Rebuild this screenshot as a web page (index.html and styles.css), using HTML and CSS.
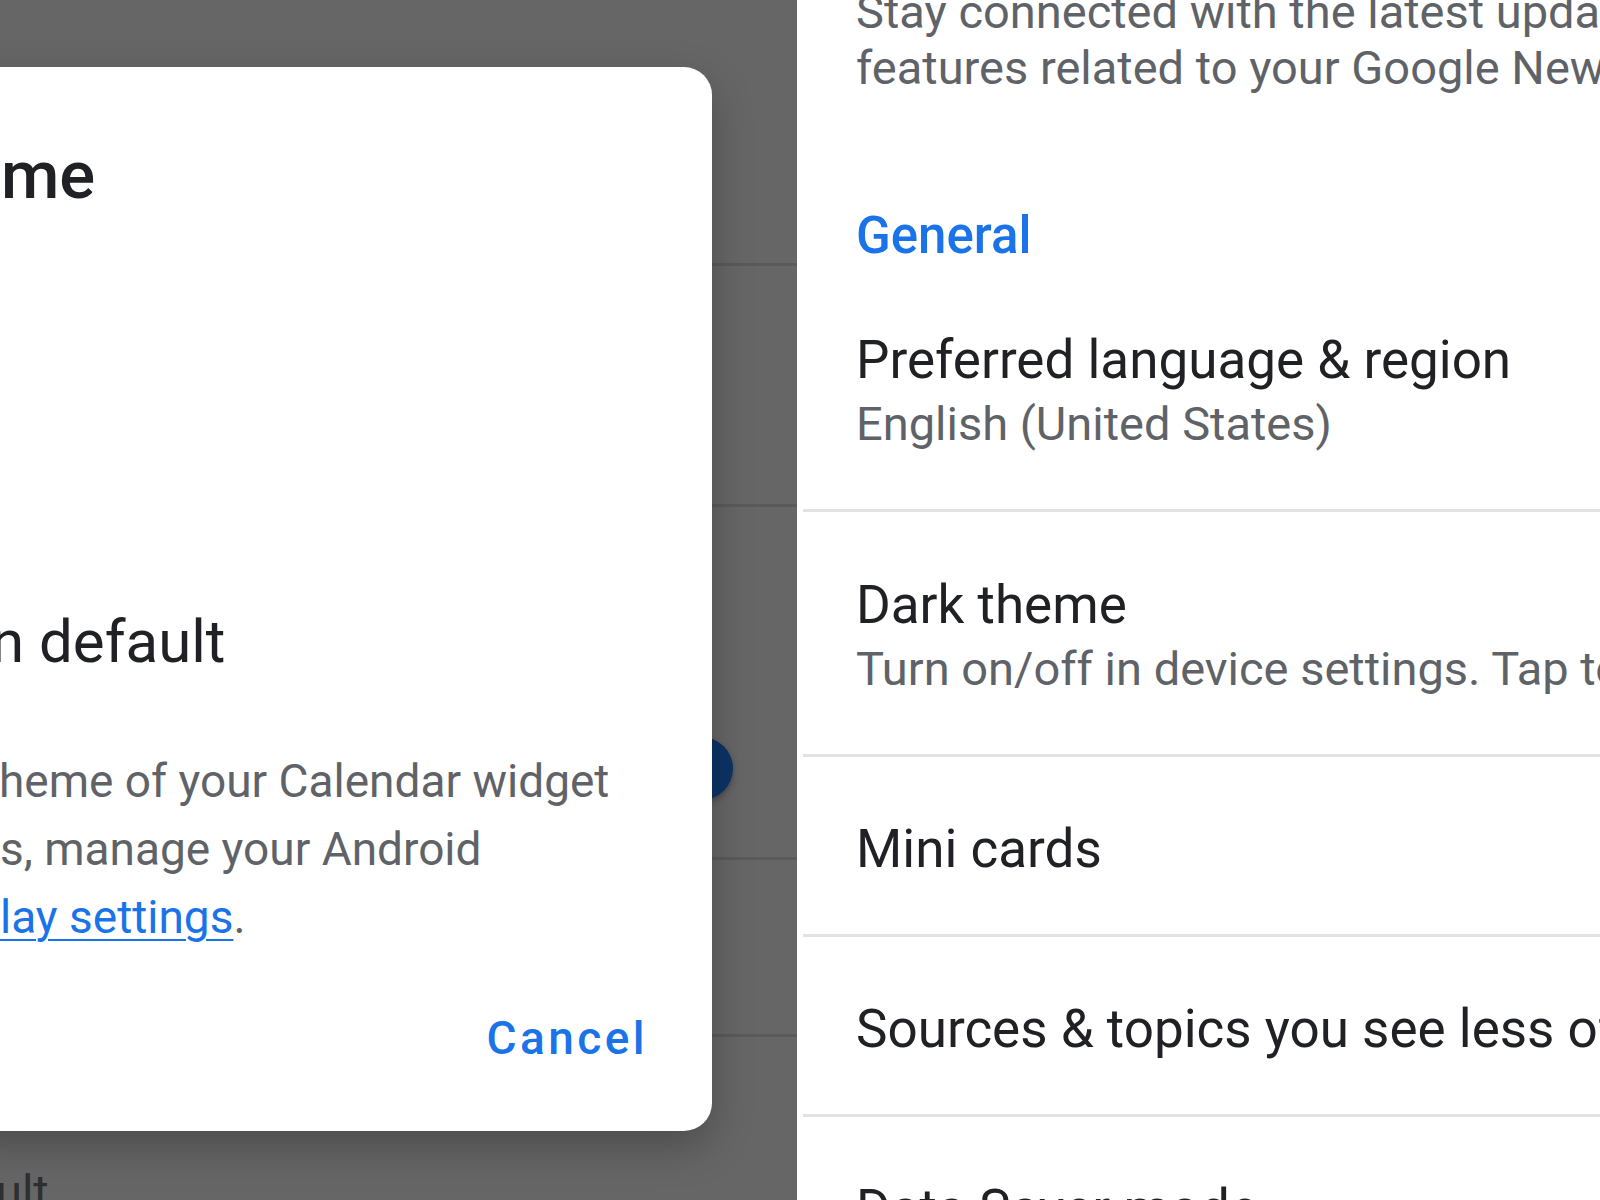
FILE: index.html
```html
<!DOCTYPE html>
<html lang="en">
<head>
    <meta charset="UTF-8">
    <meta name="viewport" content="width=device-width, initial-scale=1.0">
    <title>Theme settings</title>
    <link rel="stylesheet" href="styles.css">
</head>
<body>
    <div class="screens">
        <!-- Calendar: theme dialog over dimmed settings -->
        <section class="screen-calendar">
            <div class="dim-list">
                <div class="dim-row dim-row-a"></div>
                <div class="dim-row dim-row-b"></div>
                <div class="dim-row dim-row-c"><span class="dim-thumb"></span></div>
                <div class="dim-row dim-row-d"></div>
                <div class="dim-row dim-row-e"><span class="dim-text">ult</span></div>
            </div>

            <div class="dialog">
                <h2 class="dialog-title">me</h2>
                <div class="dialog-option">n default</div>
                <p class="dialog-body">
                    <span class="line line-1">heme of your Calendar widget</span>
                    <span class="line line-2">s, manage your Android</span>
                    <span class="line line-3"><a href="#" class="link">lay settings</a>.</span>
                </p>
                <div class="dialog-actions">
                    <button class="btn-text">Cancel</button>
                </div>
            </div>
        </section>

        <!-- News: settings list -->
        <section class="screen-news">
            <p class="intro">
                <span>Stay connected with the latest updates and</span>
                <span>features related to your Google News</span>
            </p>
            <h3 class="section-head">General</h3>
            <ul class="settings">
                <li class="setting">
                    <div class="setting-title">Preferred language &amp; region</div>
                    <div class="setting-sub">English (United States)</div>
                </li>
                <li class="setting">
                    <div class="setting-title">Dark theme</div>
                    <div class="setting-sub">Turn on/off in device settings. Tap to learn more</div>
                </li>
                <li class="setting setting-single">
                    <div class="setting-title">Mini cards</div>
                </li>
                <li class="setting setting-single">
                    <div class="setting-title">Sources &amp; topics you see less often</div>
                </li>
                <li class="setting setting-single">
                    <div class="setting-title">Data Saver mode</div>
                </li>
            </ul>
        </section>
    </div>
</body>
</html>
```

FILE: styles.css
```css
/* Reset */
* {
    box-sizing: border-box;
}

html, body {
    margin: 0;
    padding: 0;
}

body {
    width: 1600px;
    height: 1200px;
    overflow: hidden;
    font-family: Roboto, 'Noto Sans', Arial, sans-serif;
    background: #fff;
}

.screens {
    display: flex;
    height: 1200px;
}

/* Left screen (dimmed) */
.screen-calendar {
    position: relative;
    flex: none;
    width: 797px;
    height: 100%;
    background: #666;
    overflow: hidden;
}

.dim-row {
    border-bottom: 3px solid #5a5a5a;
}

.dim-row-a { height: 266px; }
.dim-row-b { height: 241px; }

.dim-row-c {
    height: 353px;
    display: flex;
    justify-content: flex-end;
    align-items: flex-end;
    padding: 0 64px 57px 0;
}

.dim-row-d { height: 177px; }

.dim-row-e {
    border-bottom: none;
    padding-top: 127px;
}

.dim-thumb {
    width: 63px;
    height: 63px;
    border-radius: 50%;
    background: #0c3366;
    box-shadow: 0 3px 6px rgba(0, 0, 0, 0.3);
}

.dim-text {
    display: block;
    margin-left: -4px;
    font-size: 47px;
    line-height: 56px;
    color: #2f2f2f;
}

/* Dialog */
.dialog {
    position: absolute;
    top: 67px;
    left: -40px;
    width: 752px;
    height: 1064px;
    background: #fff;
    border-radius: 28px;
    box-shadow: 0 16px 40px rgba(0, 0, 0, 0.25);
    padding: 68px 64px 0 40px;
    display: flex;
    flex-direction: column;
}

.dialog-title {
    margin: 0;
    padding-left: 1px;
    font-size: 67px;
    font-weight: 500;
    line-height: 80px;
    color: #202124;
}

.dialog-option {
    margin: 387px 0 0 -9px;
    font-size: 60px;
    line-height: 80px;
    color: #202124;
}

.dialog-body {
    margin: 65px 0 0;
    font-size: 46px;
    line-height: 68px;
    color: #5f6368;
}

.dialog-body .line {
    display: block;
    white-space: nowrap;
}

.line-1 { margin-left: -1px; }

.link {
    color: #1a73e8;
    text-decoration: underline;
    text-decoration-thickness: 2px;
    text-underline-offset: 6px;
}

.dialog-actions {
    margin-top: 59px;
    display: flex;
    justify-content: flex-end;
}

.btn-text {
    padding: 0;
    border: none;
    background: none;
    font-family: inherit;
    font-size: 46px;
    font-weight: 500;
    letter-spacing: 0.075em;
    line-height: 56px;
    color: #1a73e8;
}

/* Right screen */
.screen-news {
    flex: 1;
    min-width: 0;
    overflow: hidden;
    background: #fff;
}

.intro {
    margin: -16px 0 0;
    padding-left: 59px;
    font-size: 47px;
    line-height: 56px;
    color: #5f6368;
    white-space: nowrap;
}

.intro span {
    display: block;
}

.section-head {
    margin: 110px 0 0;
    padding-left: 59px;
    font-size: 51px;
    font-weight: 500;
    line-height: 60px;
    color: #1a73e8;
}

.settings {
    list-style: none;
    margin: 1px 0 0 6px;
    padding: 0;
}

.setting {
    padding: 61px 0 53px 53px;
    border-bottom: 3px solid #e2e2e2;
}

.setting-single {
    padding-top: 60px;
    padding-bottom: 53px;
}

.setting-title {
    font-size: 53px;
    line-height: 64px;
    color: #202124;
    white-space: nowrap;
}

.setting-sub {
    font-size: 47px;
    line-height: 64px;
    color: #5f6368;
    white-space: nowrap;
}
```
